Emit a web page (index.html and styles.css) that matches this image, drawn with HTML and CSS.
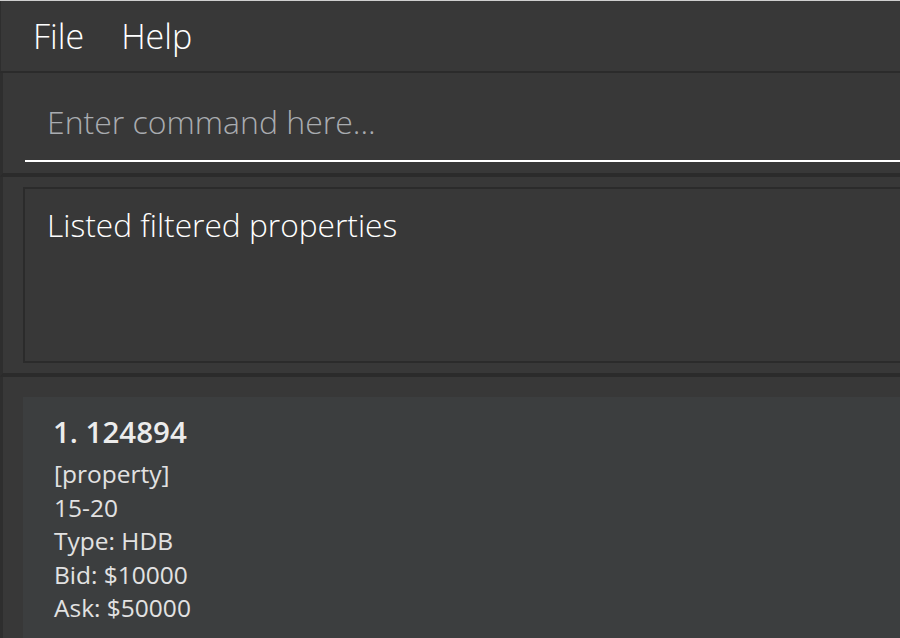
FILE: index.html
```html
<!DOCTYPE html>
<html>
<head>
<meta charset="utf-8">
<link rel="stylesheet" href="styles.css">
</head>
<body>
<div class="window">
  <div class="menubar">
    <span class="menu-item">File</span>
    <span class="menu-item">Help</span>
  </div>
  <div class="command-pane">
    <div class="command-field">Enter command here...</div>
  </div>
  <div class="result-pane">
    <div class="result-box">Listed filtered properties</div>
  </div>
  <div class="list-pane">
    <div class="card">
      <div class="card-title">1. 124894</div>
      <div class="card-details">
        <div class="card-line">[property]</div>
        <div class="card-line">15-20</div>
        <div class="card-line">Type: HDB</div>
        <div class="card-line">Bid: $10000</div>
        <div class="card-line">Ask: $50000</div>
      </div>
    </div>
  </div>
</div>
</body>
</html>
```

FILE: styles.css
```css
html, body {
  margin: 0;
  padding: 0;
  background: #383838;
  height: 100%;
  overflow: hidden;
}
.window {
  width: 900px;
  height: 638px;
  border-top: 1px solid #cfcfcf;
  box-sizing: border-box;
  display: flex;
  flex-direction: column;
  font-family: "Open Sans", "Noto Sans", sans-serif;
  color: #ffffff;
}
.menubar {
  height: 70px;
  flex: none;
  display: flex;
  align-items: center;
  gap: 37px;
  padding-left: 32px;
  border-left: 1px solid #2e2e2e;
  border-bottom: 2px solid #2b2b2b;
  font-weight: 300;
  font-size: 34px;
}
.command-pane {
  height: 104px;
  flex: none;
  box-sizing: border-box;
  border-left: 3px solid #2e2e2e;
  border-bottom: 4px solid #2b2b2b;
  padding: 24px 0 0 22px;
}
.command-field {
  height: 65px;
  box-sizing: border-box;
  border-bottom: 2px solid #ffffff;
  padding-left: 22px;
  font-weight: 300;
  font-size: 32px;
  line-height: 50px;
  color: #a9acb0;
}
.result-pane {
  height: 200px;
  flex: none;
  box-sizing: border-box;
  border-left: 3px solid #2e2e2e;
  border-bottom: 4px solid #2b2b2b;
  padding: 10px 0 10px 20px;
}
.result-box {
  height: 176px;
  box-sizing: border-box;
  border: 2px solid #2b2b2b;
  border-right: none;
  padding: 12px 0 0 22px;
  font-weight: 300;
  font-size: 31.7px;
  line-height: 48px;
}
.list-pane {
  flex: 1;
  border-left: 3px solid #2e2e2e;
  padding: 20px 0 0 20px;
}
.card {
  background: #3c3e3f;
  height: 100%;
  padding: 12px 0 0 30px;
  box-sizing: border-box;
}
.card-title {
  font-weight: 600;
  font-size: 29.5px;
  line-height: 46px;
  color: #ececec;
}
.card-details {
  margin-top: 2px;
  margin-left: 1px;
}
.card-line {
  font-size: 24.5px;
  line-height: 33.5px;
  color: #e2e2e2;
}
```
